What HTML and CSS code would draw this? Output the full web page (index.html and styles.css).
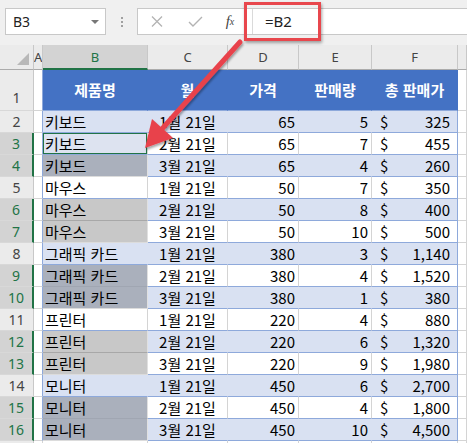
FILE: index.html
```html
<!DOCTYPE html>
<html lang="ko">
<head>
  <meta charset="UTF-8" />
  <title>판매 시트</title>
  <link rel="stylesheet" href="styles.css">
</head>
<body>
  <div class="toolbar">
    <div class="namebox"><span>B3</span><span class="caret"></span></div>
    <div class="dots"><i></i><i></i><i></i></div>
    <div class="formula">
      <span class="fbtn">
        <svg width="12" height="11" viewBox="0 0 12 11"><path d="M1 0.5L11 10.5M11 0.5L1 10.5" stroke="#b3b3b3" stroke-width="1.3" fill="none"/></svg>
      </span>
      <span class="fbtn">
        <svg width="15" height="11" viewBox="0 0 15 11"><path d="M1 6L5 10L14 1" stroke="#b3b3b3" stroke-width="1.4" fill="none"/></svg>
      </span>
      <span class="fbtn fx">f<sub>x</sub></span>
      <div class="finput">=B2</div>
    </div>
  </div>
  <div class="callout"></div>

  <div class="grid">
    <table class="sheet">
      <colgroup>
        <col style="width:34px"><col style="width:9px"><col style="width:105px"><col style="width:80px">
        <col style="width:71px"><col style="width:73px"><col style="width:86px"><col style="width:9px">
      </colgroup>
      <tr class="cols">
        <th class="corner"><span class="tri"></span></th>
        <th>A</th><th class="sel">B</th><th>C</th><th>D</th><th>E</th><th>F</th><th></th>
      </tr>
      <tr class="head">
        <td class="rn one">1</td><td class="a"></td>
        <td class="h">제품명</td><td class="h">월</td><td class="h">가격</td><td class="h">판매량</td><td class="h f">총 판매가</td><td></td>
      </tr>
      <tr class="band">
        <td class="rn">2</td><td class="a"></td>
        <td class="t b">키보드</td><td class="t c">1월 21일</td><td class="t n">65</td><td class="t n">5</td><td class="t f"><span class="cur">$</span>325</td><td></td>
      </tr>
      <tr class="plain">
        <td class="rn sel">3</td><td class="a"></td>
        <td class="t b act">키보드</td><td class="t c">2월 21일</td><td class="t n">65</td><td class="t n">7</td><td class="t f"><span class="cur">$</span>455</td><td></td>
      </tr>
      <tr class="band">
        <td class="rn sel">4</td><td class="a"></td>
        <td class="t b sg">키보드</td><td class="t c">3월 21일</td><td class="t n">65</td><td class="t n">4</td><td class="t f"><span class="cur">$</span>260</td><td></td>
      </tr>
      <tr class="plain">
        <td class="rn">5</td><td class="a"></td>
        <td class="t b">마우스</td><td class="t c">1월 21일</td><td class="t n">50</td><td class="t n">7</td><td class="t f"><span class="cur">$</span>350</td><td></td>
      </tr>
      <tr class="band">
        <td class="rn sel">6</td><td class="a"></td>
        <td class="t b gr top">마우스</td><td class="t c">2월 21일</td><td class="t n">50</td><td class="t n">8</td><td class="t f"><span class="cur">$</span>400</td><td></td>
      </tr>
      <tr class="plain">
        <td class="rn sel">7</td><td class="a"></td>
        <td class="t b gr">마우스</td><td class="t c">3월 21일</td><td class="t n">50</td><td class="t n">10</td><td class="t f"><span class="cur">$</span>500</td><td></td>
      </tr>
      <tr class="band">
        <td class="rn">8</td><td class="a"></td>
        <td class="t b">그래픽 카드</td><td class="t c">1월 21일</td><td class="t n">380</td><td class="t n">3</td><td class="t f"><span class="cur">$</span>1,140</td><td></td>
      </tr>
      <tr class="plain">
        <td class="rn sel">9</td><td class="a"></td>
        <td class="t b sg top">그래픽 카드</td><td class="t c">2월 21일</td><td class="t n">380</td><td class="t n">4</td><td class="t f"><span class="cur">$</span>1,520</td><td></td>
      </tr>
      <tr class="band">
        <td class="rn sel">10</td><td class="a"></td>
        <td class="t b sg">그래픽 카드</td><td class="t c">3월 21일</td><td class="t n">380</td><td class="t n">1</td><td class="t f"><span class="cur">$</span>380</td><td></td>
      </tr>
      <tr class="plain">
        <td class="rn">11</td><td class="a"></td>
        <td class="t b">프린터</td><td class="t c">1월 21일</td><td class="t n">220</td><td class="t n">4</td><td class="t f"><span class="cur">$</span>880</td><td></td>
      </tr>
      <tr class="band">
        <td class="rn sel">12</td><td class="a"></td>
        <td class="t b gr top">프린터</td><td class="t c">2월 21일</td><td class="t n">220</td><td class="t n">6</td><td class="t f"><span class="cur">$</span>1,320</td><td></td>
      </tr>
      <tr class="plain">
        <td class="rn sel">13</td><td class="a"></td>
        <td class="t b gr">프린터</td><td class="t c">3월 21일</td><td class="t n">220</td><td class="t n">9</td><td class="t f"><span class="cur">$</span>1,980</td><td></td>
      </tr>
      <tr class="band">
        <td class="rn">14</td><td class="a"></td>
        <td class="t b">모니터</td><td class="t c">1월 21일</td><td class="t n">450</td><td class="t n">6</td><td class="t f"><span class="cur">$</span>2,700</td><td></td>
      </tr>
      <tr class="plain">
        <td class="rn sel">15</td><td class="a"></td>
        <td class="t b sg top">모니터</td><td class="t c">2월 21일</td><td class="t n">450</td><td class="t n">4</td><td class="t f"><span class="cur">$</span>1,800</td><td></td>
      </tr>
      <tr class="band">
        <td class="rn sel">16</td><td class="a"></td>
        <td class="t b sg">모니터</td><td class="t c">3월 21일</td><td class="t n">450</td><td class="t n">10</td><td class="t f"><span class="cur">$</span>4,500</td><td></td>
      </tr>
      <tr>
        <td class="rn"></td><td></td><td></td><td></td><td></td><td></td><td></td><td></td>
      </tr>
    </table>
  </div>

  <svg class="arrow" width="467" height="443" viewBox="0 0 467 443">
    <defs>
      <filter id="shadow" x="-20%" y="-20%" width="140%" height="140%">
        <feDropShadow dx="1" dy="2" stdDeviation="1.2" flood-color="#000" flood-opacity="0.35"/>
      </filter>
    </defs>
    <g filter="url(#shadow)" fill="#e8434b">
      <line x1="240" y1="42" x2="161" y2="130" stroke="#e8434b" stroke-width="5" stroke-linecap="round"/>
      <polygon points="145,148 152,119 173,138"/>
    </g>
  </svg>
</body>
</html>
```

FILE: styles.css
```css
* {
  box-sizing: border-box;
}
html {
  overflow: hidden;
}
body {
  margin: 0;
  width: 467px;
  height: 443px;
  overflow: hidden;
  background: #fff;
  font-family: "Noto Sans", sans-serif;
}
.toolbar {
  display: flex;
  align-items: flex-start;
  height: 45px;
  padding: 8px 0 0 5px;
  background: #f0f0f0;
}
.namebox {
  width: 101px;
  height: 27px;
  display: flex;
  align-items: center;
  justify-content: space-between;
  padding: 0 6px 0 7px;
  background: #fff;
  border: 1px solid #c8c8c8;
  font-size: 14px;
  color: #222;
}
.caret {
  border-left: 4px solid transparent;
  border-right: 4px solid transparent;
  border-top: 4px solid #777;
}
.dots {
  width: 31px;
  height: 27px;
  display: flex;
  flex-direction: column;
  align-items: center;
  justify-content: center;
  gap: 2px;
}
.dots i {
  width: 2px;
  height: 2px;
  background: #a0a0a0;
}
.formula {
  flex: 1;
  height: 27px;
  display: flex;
  align-items: center;
  background: #fff;
  border: 1px solid #c8c8c8;
  border-right: none;
}
.fbtn {
  width: 38px;
  display: flex;
  justify-content: center;
  align-items: center;
}
.fx {
  font: italic 15px "Liberation Serif", serif;
  color: #444;
  padding-right: 6px;
}
.fx sub {
  font-size: 10px;
  vertical-align: -2px;
}
.finput {
  flex: 1;
  height: 25px;
  padding-left: 12px;
  border-left: 1px solid #dadada;
  font-size: 15px;
  line-height: 24px;
  color: #222;
}
.callout {
  position: absolute;
  left: 244px;
  top: 2px;
  width: 77px;
  height: 39px;
  border: 3px solid #e8474d;
  box-shadow: 1px 2px 3px rgba(0,0,0,0.35);
}
.arrow {
  position: absolute;
  left: 0;
  top: 0;
  pointer-events: none;
}

/* grid */
.grid {
  width: 467px;
  overflow: hidden;
}
.sheet {
  border-collapse: separate;
  border-spacing: 0;
  table-layout: fixed;
  width: 467px;
}
.sheet td,
.sheet th {
  height: 22px;
  padding: 0;
  border-right: 1px solid #d4d4d4;
  border-bottom: 1px solid #d4d4d4;
  white-space: nowrap;
  overflow: hidden;
  font: 15px/20px "Noto Sans CJK KR", sans-serif;
  color: #000;
}
.cols th {
  background: #ebebeb;
  border-right-color: #c8c8c8;
  border-bottom-color: #ababab;
  font: 13px/20px "Noto Sans", sans-serif;
  color: #444;
  font-weight: normal;
  text-align: center;
}
.cols th.sel {
  background: #d3d3d3;
  color: #217346;
  border-bottom: 2px solid #217346;
}
.cols th.corner {
  text-align: right;
  vertical-align: bottom;
  padding: 0 4px 4px 0;
}
.tri {
  display: inline-block;
  vertical-align: bottom;
  border-left: 12px solid transparent;
  border-bottom: 12px solid #b8b8b8;
}
.sheet td.rn {
  background: #ebebeb;
  border-right-color: #c8c8c8;
  border-bottom-color: #d8d8d8;
  font: 14px/20px "Noto Sans", sans-serif;
  color: #444;
  text-align: center;
}
.sheet td.rn.sel {
  background: #d3d3d3;
  color: #217346;
  border-right: 2px solid #217346;
}
.sheet td.rn.one {
  vertical-align: bottom;
  padding-bottom: 2px;
}
.sheet td.a {
  border-right-color: #8ea9db;
}
.head td {
  height: 41px;
}
.sheet .head td.h {
  background: #4472c4;
  border-right-color: #4472c4;
  border-bottom-color: #8ea9db;
  color: #fff;
  font-weight: bold;
  text-align: center;
}
.band td.t {
  background: #d9e1f2;
  border-right-color: #d9e1f2;
  border-bottom-color: #8ea9db;
}
.plain td.t {
  background: #fff;
  border-bottom-color: #8ea9db;
}
.sheet td.f {
  border-right-color: #8ea9db;
}
.sheet td.b {
  padding-left: 2px;
}
.sheet td.c {
  text-align: center;
}
.sheet td.n {
  text-align: right;
  padding-right: 3px;
}
.sheet td.t.f {
  text-align: right;
  padding: 0 7px 0 8px;
}
.cur {
  float: left;
}
.sheet td.b.act {
  background: #dde3f0;
  box-shadow: inset 0 0 0 1px #217346;
}
.sheet td.b.sg {
  background: #aab0bc;
  border-right-color: #e0e0e0;
  border-bottom-color: #dcdcdc;
}
.sheet td.b.gr {
  background: #c8c8c8;
  border-right-color: #e0e0e0;
  border-bottom-color: #dcdcdc;
}
.sheet td.b.gr.top {
  border-bottom-color: #a8a8a8;
}
.sheet td.b.sg.top {
  border-bottom-color: #a0a6b2;
}
```
